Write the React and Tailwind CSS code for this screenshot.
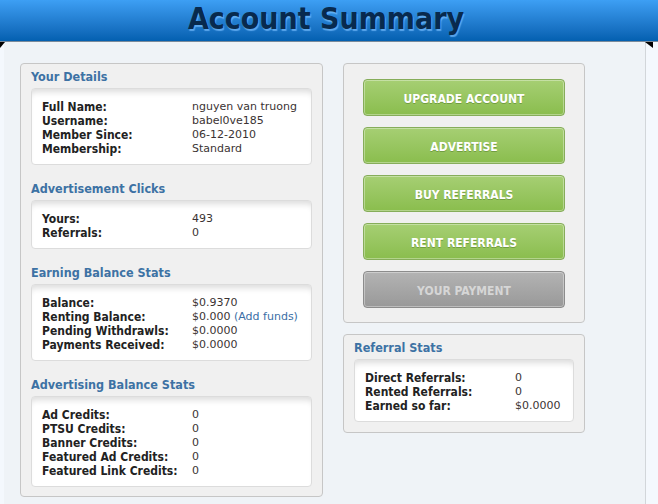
import React from 'react';

const FONT = "font-['DejaVu_Sans_Condensed','DejaVu_Sans',sans-serif]";

const sections = [
  {
    title: 'Your Details',
    rows: [
      ['Full Name:', 'nguyen van truong'],
      ['Username:', 'babel0ve185'],
      ['Member Since:', '06-12-2010'],
      ['Membership:', 'Standard'],
    ],
  },
  {
    title: 'Advertisement Clicks',
    rows: [
      ['Yours:', '493'],
      ['Referrals:', '0'],
    ],
  },
  {
    title: 'Earning Balance Stats',
    rows: [
      ['Balance:', '$0.9370'],
      ['Renting Balance:', 'addfunds'],
      ['Pending Withdrawls:', '$0.0000'],
      ['Payments Received:', '$0.0000'],
    ],
  },
  {
    title: 'Advertising Balance Stats',
    rows: [
      ['Ad Credits:', '0'],
      ['PTSU Credits:', '0'],
      ['Banner Credits:', '0'],
      ['Featured Ad Credits:', '0'],
      ['Featured Link Credits:', '0'],
    ],
  },
];

const referralRows = [
  ['Direct Referrals:', '0'],
  ['Rented Referrals:', '0'],
  ['Earned so far:', '$0.0000'],
];

// 하얀 통계 박스
const StatBox = ({ rows }) => (
  <div className="rounded-[4px] border border-[#dcdcdc] bg-white pl-[10px] pr-2 pt-[11px] pb-[8px] shadow-[inset_0_7px_6px_-4px_rgba(0,0,0,0.14)]">
    {rows.map(([label, value]) => (
      <div key={label} className="flex h-[14px] items-center text-[11px] leading-[14px]">
        <span className="w-[150px] shrink-0 text-[12px] font-bold text-[#222]">{label}</span>
        {value === 'addfunds' ? (
          <span className="font-['DejaVu_Sans',sans-serif] text-[#3b3333]">
            $0.000 <span className="text-[#3a6ea5]">(Add funds)</span>
          </span>
        ) : (
          <span className="font-['DejaVu_Sans',sans-serif] text-[#3b3333]">{value}</span>
        )}
      </div>
    ))}
  </div>
);

const Heading = ({ children }) => (
  <h2 className="mb-[4px] pt-[1px] text-[12.5px] leading-[15px] font-bold text-[#3d72a4]">{children}</h2>
);

const GreenButton = ({ children, disabled = false }) => (
  <button
    className={
      disabled
        ? 'h-[37px] w-[202px] rounded-[4px] border border-[#8c8c8c] bg-gradient-to-b from-[#b3b3b3] to-[#999999] pt-[2px] text-[12px] font-bold text-[#d6d6d6] shadow-[inset_0_0_0_1px_rgba(255,255,255,0.35)]'
        : 'h-[37px] w-[202px] rounded-[4px] border border-[#86ad5a] bg-gradient-to-b from-[#a6cf73] to-[#8abd4d] pt-[2px] text-[12px] font-bold text-white shadow-[inset_0_0_0_1px_rgba(255,255,255,0.35)] [text-shadow:0_1px_0_rgba(80,120,40,0.5)]'
    }
  >
    {children}
  </button>
);

export default function App() {
  return (
    <div className={`h-[504px] w-[658px] overflow-hidden bg-[#f4f8fd] ${FONT}`}>
      {/* 상단 타이틀 바 */}
      <div className="flex h-[42px] items-center justify-center border-b border-[#7a8a9a] bg-gradient-to-b from-[#3d9ff4] to-[#0360b0]">
        <h1 className="-mt-[3px] ml-[-6px] text-[30px] leading-none font-bold text-[#082a4e] [text-shadow:1px_2px_1px_rgba(120,190,255,0.7)]">
          Account Summary
        </h1>
      </div>

      <div className="relative">
        <div className="absolute left-0 top-0 h-0 w-0 border-r-[5px] border-t-[6px] border-r-transparent border-t-black" />
        <div className="absolute left-[645px] top-0 h-0 w-0 border-l-[8px] border-t-[6px] border-l-transparent border-t-black" />

        <div className="ml-[4px] flex h-[462px] w-[642px] gap-[20px] border-r border-[#d2d6da] bg-[#eff3f7] pl-[16px] pt-[21px]">
          {/* 왼쪽 패널 */}
          <div className="h-[434px] w-[303px] rounded-[4px] border border-[#c6c6c6] bg-[#f0f0f0] px-[10px] pt-[4px]">
            {sections.map((s, i) => (
              <div key={s.title} className={i > 0 ? 'mt-[15px]' : ''}>
                <Heading>{s.title}</Heading>
                <StatBox rows={s.rows} />
              </div>
            ))}
          </div>

          {/* 오른쪽 패널 */}
          <div className="flex w-[242px] flex-col">
            <div className="flex flex-col gap-[11px] rounded-[4px] border border-[#c6c6c6] bg-[#f0f0f0] pl-[19px] pt-[15px] pb-[14px]">
              <GreenButton>UPGRADE ACCOUNT</GreenButton>
              <GreenButton>ADVERTISE</GreenButton>
              <GreenButton>BUY REFERRALS</GreenButton>
              <GreenButton>RENT REFERRALS</GreenButton>
              <GreenButton disabled>YOUR PAYMENT</GreenButton>
            </div>

            <div className="mt-[11px] rounded-[4px] border border-[#c6c6c6] bg-[#f0f0f0] px-[10px] pt-[4px] pb-[10px]">
              <Heading>Referral Stats</Heading>
              <StatBox rows={referralRows} />
            </div>
          </div>
        </div>
      </div>
    </div>
  );
}
